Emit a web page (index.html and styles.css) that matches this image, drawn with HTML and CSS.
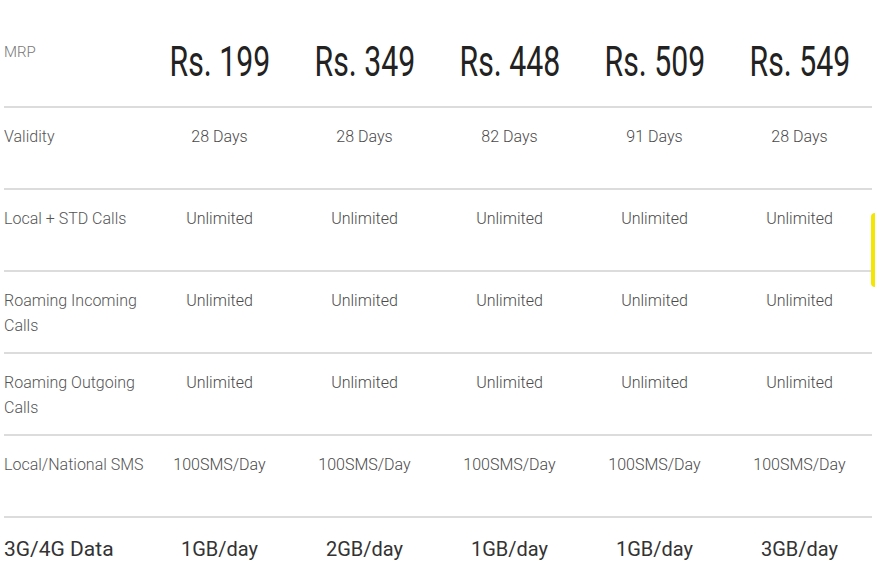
FILE: index.html
```html
<!DOCTYPE html>
<html>
<head>
<meta charset="utf-8">
<link rel="stylesheet" href="styles.css">
</head>
<body>
<div class="table">
  <div class="row head">
    <div class="label mrp">MRP</div>
    <div class="cell price"><span>Rs. 199</span></div>
    <div class="cell price"><span>Rs. 349</span></div>
    <div class="cell price"><span>Rs. 448</span></div>
    <div class="cell price"><span>Rs. 509</span></div>
    <div class="cell price"><span>Rs. 549</span></div>
  </div>
  <div class="row">
    <div class="label">Validity</div>
    <div class="cell">28 Days</div>
    <div class="cell">28 Days</div>
    <div class="cell">82 Days</div>
    <div class="cell">91 Days</div>
    <div class="cell">28 Days</div>
  </div>
  <div class="row">
    <div class="label">Local + STD Calls</div>
    <div class="cell">Unlimited</div>
    <div class="cell">Unlimited</div>
    <div class="cell">Unlimited</div>
    <div class="cell">Unlimited</div>
    <div class="cell">Unlimited</div>
  </div>
  <div class="row">
    <div class="label">Roaming Incoming Calls</div>
    <div class="cell">Unlimited</div>
    <div class="cell">Unlimited</div>
    <div class="cell">Unlimited</div>
    <div class="cell">Unlimited</div>
    <div class="cell">Unlimited</div>
  </div>
  <div class="row">
    <div class="label">Roaming Outgoing Calls</div>
    <div class="cell">Unlimited</div>
    <div class="cell">Unlimited</div>
    <div class="cell">Unlimited</div>
    <div class="cell">Unlimited</div>
    <div class="cell">Unlimited</div>
  </div>
  <div class="row">
    <div class="label nowrap">Local/National SMS</div>
    <div class="cell">100SMS/Day</div>
    <div class="cell">100SMS/Day</div>
    <div class="cell">100SMS/Day</div>
    <div class="cell">100SMS/Day</div>
    <div class="cell">100SMS/Day</div>
  </div>
  <div class="row data">
    <div class="label">3G/4G Data</div>
    <div class="cell">1GB/day</div>
    <div class="cell">2GB/day</div>
    <div class="cell">1GB/day</div>
    <div class="cell">1GB/day</div>
    <div class="cell">3GB/day</div>
  </div>
</div>
<div class="marker"></div>
</body>
</html>
```

FILE: styles.css
```css
html, body {
  margin: 0;
  padding: 0;
  background: #fff;
  width: 875px;
  height: 583px;
  overflow: hidden;
  font-family: Roboto, "Liberation Sans", sans-serif;
}

.table {
  margin-left: 4px;
  width: 868px;
}

.row {
  display: grid;
  grid-template-columns: 143px repeat(5, 145px);
  box-sizing: border-box;
  height: 82px;
  border-top: 2px solid #dcdcdc;
  padding-top: 16px;
  font-size: 16px;
  font-weight: 300;
  line-height: 25px;
  color: #4a4a4a;
}

.row.head {
  height: 106px;
  border-top: none;
  padding-top: 0;
}

.label {
  color: #555;
  padding-right: 4px;
}

.nowrap {
  white-space: nowrap;
}

.cell {
  text-align: center;
}

.mrp {
  font-size: 15px;
  color: #777;
  padding-top: 40px;
}

.price {
  padding-top: 37px;
  line-height: 50px;
  font-size: 42px;
  font-weight: 400;
  color: #222;
}

.price span {
  display: inline-block;
  transform: scaleX(0.72);
}

.row.data {
  height: 67px;
  padding-top: 19px;
  font-size: 20px;
  font-weight: 400;
  color: #333;
}

.row.data .label {
  font-size: 21px;
  color: #333;
}

.marker {
  position: absolute;
  left: 871px;
  top: 213px;
  width: 8px;
  height: 74px;
  border-radius: 4px;
  background: #f4e600;
}
```
